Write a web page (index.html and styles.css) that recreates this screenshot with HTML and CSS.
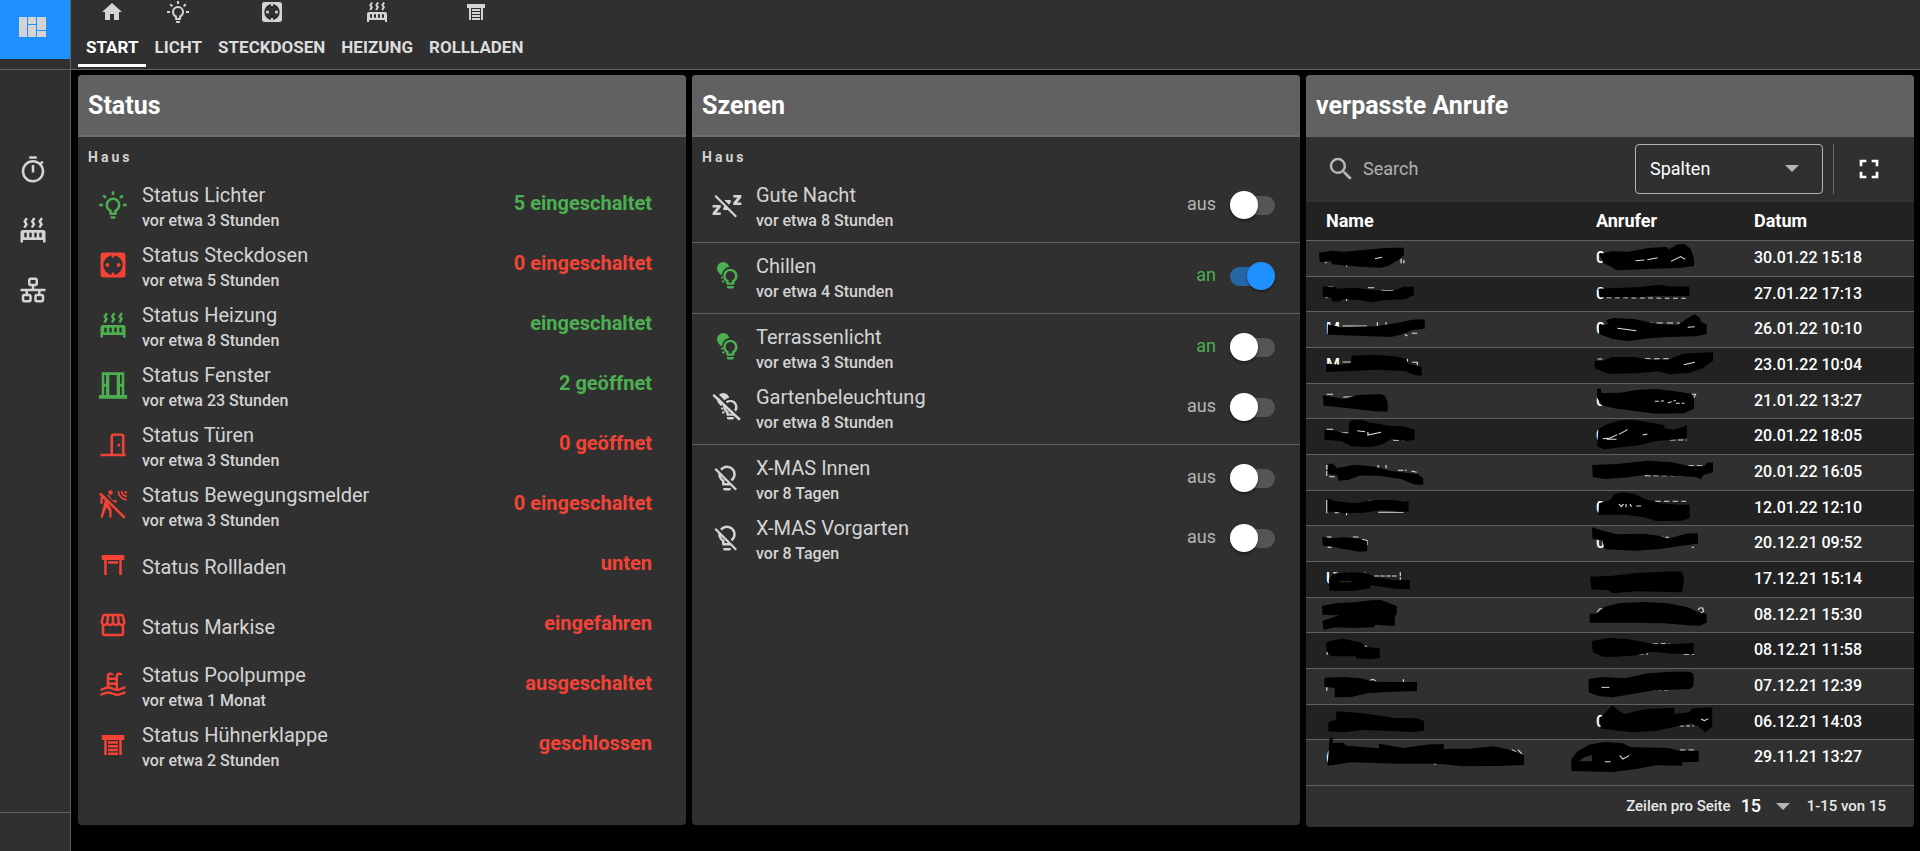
FILE: index.html
```html
<!DOCTYPE html>
<html lang="de">
<head>
<meta charset="utf-8">
<title>Start</title>
<link rel="stylesheet" href="styles.css">
</head>
<body>
<svg class="sprite" aria-hidden="true">
  <symbol id="i-home" viewBox="0 0 24 24"><path d="M10,20V14H14V20H19V12H22L12,3L2,12H5V20H10Z"/></symbol>
  <symbol id="i-bulb-on" viewBox="0 0 24 24"><path d="M20,11H23V13H20V11M1,11H4V13H1V11M13,1V4H11V1H13M4.92,3.5L7.05,5.64L5.63,7.05L3.5,4.93L4.92,3.5M16.95,5.63L19.07,3.5L20.5,4.93L18.37,7.05L16.95,5.63M12,6A6,6 0 0,1 18,12C18,14.22 16.79,16.16 15,17.2V19A1,1 0 0,1 14,20H10A1,1 0 0,1 9,19V17.2C7.21,16.16 6,14.22 6,12A6,6 0 0,1 12,6M14,21V22A1,1 0 0,1 13,23H11A1,1 0 0,1 10,22V21H14M11,18H13V15.87C14.73,15.43 16,13.86 16,12A4,4 0 0,0 12,8A4,4 0 0,0 8,12C8,13.86 9.27,15.43 11,15.87V18Z"/></symbol>
  <symbol id="i-socket" viewBox="0 0 24 24"><path fill-rule="evenodd" d="M4.2,2A2.2,2.2 0 0,0 2,4.2V19.8C2,21 3,22 4.2,22H19.8A2.2,2.2 0 0,0 22,19.8V4.2C22,3 21,2 19.8,2H4.2M13,4.1A8,8 0 0,1 13,19.9V18H11V19.9A8,8 0 0,1 11,4.1V6H13V4.1Z"/><circle cx="7.5" cy="12" r="1.6"/><circle cx="16.5" cy="12" r="1.6"/></symbol>
  <symbol id="i-radiator" viewBox="0 0 24 24"><path fill-rule="evenodd" d="M7.95,3L6.53,5.19L7.95,7.4L5.95,10.5L4.22,9.6L5.64,7.39L4.22,5.19L6.22,2.09L7.95,3M13.95,2.89L12.53,5.1L13.95,7.3L11.95,10.4L10.22,9.5L11.64,7.3L10.22,5.1L12.22,2L13.95,2.89M20,2.89L18.56,5.1L20,7.3L18,10.4L16.25,9.5L17.67,7.3L16.25,5.1L18.25,2L20,2.89M2,22V14A2,2 0 0,1 4,12H20A2,2 0 0,1 22,14V22H20V20H4V22H2M6,14A1,1 0 0,0 5,15V17A1,1 0 0,0 7,17V15A1,1 0 0,0 6,14M10,14A1,1 0 0,0 9,15V17A1,1 0 0,0 11,17V15A1,1 0 0,0 10,14M14,14A1,1 0 0,0 13,15V17A1,1 0 0,0 15,17V15A1,1 0 0,0 14,14M18,14A1,1 0 0,0 17,15V17A1,1 0 0,0 19,17V15A1,1 0 0,0 18,14Z"/></symbol>
  <symbol id="i-shutter" viewBox="0 0 24 24"><path d="M3 4H21V8H19V20H17V8H7V20H5V8H3V4M8 9H16V11H8V9M8 12H16V14H8V12M8 15H16V17H8V15M8 18H16V20H8V18Z"/></symbol>
  <symbol id="i-shutter-open" viewBox="0 0 24 24"><path d="M3,4H21V8H19V20H17V8H7V20H5V8H3V4M8,9H16V11H8V9Z"/></symbol>
  <symbol id="i-timer" viewBox="0 0 24 24"><path d="M12,20A7,7 0 0,1 5,13A7,7 0 0,1 12,6A7,7 0 0,1 19,13A7,7 0 0,1 12,20M19.03,7.39L20.45,5.97C20,5.46 19.55,5 19.04,4.56L17.62,6C16.07,4.74 14.12,4 12,4A9,9 0 0,0 3,13A9,9 0 0,0 12,22C17,22 21,17.97 21,13C21,10.88 20.26,8.93 19.03,7.39M11,14H13V8H11M15,1H9V3H15V1Z"/></symbol>
  <symbol id="i-lan" viewBox="0 0 24 24"><path d="M10,2C8.89,2 8,2.89 8,4V7C8,8.11 8.89,9 10,9H11V11H2V13H6V15H5C3.89,15 3,15.89 3,17V20C3,21.11 3.89,22 5,22H9C10.11,22 11,21.11 11,20V17C11,15.89 10.11,15 9,15H8V13H16V15H15C13.89,15 13,15.89 13,17V20C13,21.11 13.89,22 15,22H19C20.11,22 21,21.11 21,20V17C21,15.89 20.11,15 19,15H18V13H22V11H13V9H14C15.11,9 16,8.11 16,7V4C16,2.89 15.11,2 14,2H10M10,4H14V7H10V4M5,17H9V20H5V17M15,17H19V20H15V17Z"/></symbol>
  <symbol id="i-window" viewBox="0 0 24 24"><path fill-rule="evenodd" d="M3,1.7H21V20H23.3V23H.7V20H3ZM5,4V11H6.4V4ZM5,13.4V20H6.4V13.4ZM9,4V20H15V4ZM17.6,4V11H19V4ZM17.6,13.4V20H19V13.4Z"/></symbol>
  <symbol id="i-door" viewBox="0 0 24 24"><path fill-rule="evenodd" d="M2,19H10V5A2.2,2.2 0 0,1 12.2,2.8H19A2.2,2.2 0 0,1 21.2,5V19H22V21H2ZM12,19H19.2V5.6A1,1 0 0,0 18.2,4.6H13A1,1 0 0,0 12,5.6Z"/><circle cx="16.8" cy="12" r="1.2"/></symbol>
  <symbol id="i-motion-off" viewBox="0 0 24 24"><path d="M10,0.2A1.8,1.8 0 1,0 10,3.8A1.8,1.8 0 1,0 10,0.2M15.67,1A7.33,7.33 0 0,0 23,8.33V7A6,6 0 0,1 17,1H15.67M18.33,1C18.33,3.58 20.42,5.67 23,5.67V4.33C21.16,4.33 19.67,2.84 19.67,1H18.33M21,1A2,2 0 0,0 23,3V1H21M7.92,4.03C7.75,4.03 7.58,4.06 7.42,4.11L2,5.8V11H3.8V7.33L5.91,6.67L2,22H3.8L6.67,13.89L9,17V22H10.8V15.59L8.31,11.05L9.04,8.18L10.12,10H15V8.2H11.38L9.38,4.87C9.08,4.37 8.54,4.03 7.92,4.03Z"/><path class="gap" d="M3,1.6L22.5,21"/><path class="slash" d="M1.6,2.8L21.4,22.2"/></symbol>
  <symbol id="i-store" viewBox="0 0 24 24"><path d="M21.9 8.89l-1.05-4.37c-.22-.9-1-1.52-1.91-1.52H5.05c-.9 0-1.69.63-1.9 1.52L2.1 8.89c-.24 1.02-.02 2.06.62 2.88.08.11.19.19.28.29V19c0 1.1.9 2 2 2h14c1.1 0 2-.9 2-2v-6.94c.09-.09.2-.18.28-.28.64-.82.87-1.87.62-2.89zm-2.99-3.9l1.05 4.37c.1.42.01.84-.25 1.17-.14.18-.44.47-.94.47-.61 0-1.14-.49-1.21-1.14L16.98 5l1.93-.01zM13 5h1.96l.54 4.52c.05.39-.07.78-.33 1.07-.22.26-.54.41-.95.41-.67 0-1.22-.59-1.22-1.31V5zM8.49 9.52L9.04 5H11v4.69c0 .72-.55 1.31-1.29 1.31-.34 0-.65-.15-.89-.41-.25-.29-.37-.68-.33-1.07zm-4.45-.16L5.05 5h1.97l-.58 4.86c-.08.65-.6 1.14-1.21 1.14-.49 0-.8-.29-.93-.47-.27-.32-.36-.75-.26-1.17zM5 19v-6.03c.08.01.15.03.23.03.87 0 1.66-.36 2.24-.95.6.6 1.4.95 2.31.95.87 0 1.65-.36 2.23-.93.59.57 1.39.93 2.29.93.84 0 1.64-.35 2.24-.95.58.59 1.37.95 2.24.95.08 0 .15-.02.23-.03V19H5z"/></symbol>
  <symbol id="i-pool" viewBox="0 0 24 24"><path d="M2,15C3.67,14.25 5.33,13.5 7,13.17V5A3,3 0 0,1 10,2C11.31,2 12.42,2.83 12.83,4H10A1,1 0 0,0 9,5V6H14V5A3,3 0 0,1 17,2C18.31,2 19.42,2.83 19.83,4H17A1,1 0 0,0 16,5V14.94C18,14.62 20,13 22,13V15C19.78,15 17.56,17 15.33,17C13.11,17 10.89,15 8.67,15C6.44,15 4.22,16 2,17V15M14,8H9V10H14V8M14,12H9V13C10.67,13.16 12.33,14.31 14,14.79V12M2,19C4.22,18 6.44,17 8.67,17C10.89,17 13.11,19 15.33,19C17.56,19 19.78,17 22,17V19C19.78,19 17.56,21 15.33,21C13.11,21 10.89,19 8.67,19C6.44,19 4.22,20 2,21V19Z"/></symbol>
  <symbol id="i-sleep-off" viewBox="0 0 24 24"><path d="M2,5.27L3.28,4L20,20.72L18.73,22L12.73,16H9V14.39L9.79,13.06L2,5.27M23.5,12H17V10.21L20.39,6H17V4H23.5V5.79L20.2,10H23.5V12M9.82,8H15V9.79L13.54,11.72L9.82,8M7,20H.5V18.21L4,14H.5V12H7V13.79L3.62,18H7V20Z"/></symbol>
  <symbol id="i-bulbs" viewBox="0 0 24 24"><path d="M13.8,4.6A5,5 0 1,0 5.6,9.6C6.2,10.3 6.7,10.6 6.9,11H8.1C8.1,8.2 10.5,5.2 13.8,4.6ZM7.3,12.4H8.5L9,14H7.3ZM8,15.5H10V17.2H9A1,1 0 0,1 8,16.2Z"/><path fill-rule="evenodd" d="M14.8,6.4A5.6,5.6 0 0,1 18,16.6V18A1,1 0 0,1 17,19H12.4A1,1 0 0,1 11.4,18V16.6A5.6,5.6 0 0,1 14.8,6.4ZM13.3,17.2H16V15.4A3.8,3.8 0 1,0 13.3,15.4Z"/><path d="M12,20H17.4V21.2A1,1 0 0,1 16.4,22H13A1,1 0 0,1 12,21.2Z"/></symbol>
  <symbol id="i-bulbs-off" viewBox="0 0 24 24"><use href="#i-bulbs"/><path class="gap" d="M3,1.1L23,21"/><path class="slash" d="M1,2.3L22.3,22.2"/></symbol>
  <symbol id="i-bulb-off" viewBox="0 0 24 24"><path d="M12,2C9.76,2 7.78,3.05 6.5,4.68L7.93,6.11C8.84,4.84 10.32,4 12,4A5,5 0 0,1 17,9C17,10.68 16.16,12.16 14.89,13.06L16.31,14.5C17.94,13.21 19,11.24 19,9A7,7 0 0,0 12,2M3.28,4L2,5.27L5.04,8.3C5,8.53 5,8.76 5,9C5,11.38 6.19,13.47 8,14.74V17A1,1 0 0,0 9,18H14.73L18.73,22L20,20.72L3.28,4M7.23,10.5L12.73,16H10V13.58C8.68,13 7.66,11.88 7.23,10.5M9,20V21A1,1 0 0,0 10,22H14A1,1 0 0,0 15,21V20H9Z"/></symbol>
  <symbol id="i-search" viewBox="0 0 24 24"><path d="M9.5,3A6.5,6.5 0 0,1 16,9.5C16,11.11 15.41,12.59 14.44,13.73L14.71,14H15.5L20.5,19L19,20.5L14,15.5V14.71L13.73,14.44C12.59,15.41 11.11,16 9.5,16A6.5,6.5 0 0,1 3,9.5A6.5,6.5 0 0,1 9.5,3M9.5,5C7,5 5,7 5,9.5C5,12 7,14 9.5,14C12,14 14,12 14,9.5C14,7 12,5 9.5,5Z"/></symbol>
  <symbol id="i-full" viewBox="0 0 24 24"><path d="M5,5H10V7H7V10H5V5M14,5H19V10H17V7H14V5M17,14H19V19H14V17H17V14M10,17V19H5V14H7V17H10Z"/></symbol>
</svg>

<div class="app">
  <aside class="side">
    <div class="side-top">
      <button class="side-active" aria-label="Ansichten"><svg width="27" height="20" viewBox="0 0 27 20"><path d="M0,0H8V20H0ZM9,0H17V7H9ZM9,8H17V20H9ZM18,0H27V13H18ZM18,14H27V20H18Z"/></svg></button>
    </div>
    <nav class="side-nav">
      <a href="#timer" aria-label="Timer"><svg class="icon"><use href="#i-timer"/></svg></a>
      <a href="#heizung" aria-label="Heizung"><svg class="icon"><use href="#i-radiator"/></svg></a>
      <a href="#netzwerk" aria-label="Netzwerk"><svg class="icon"><use href="#i-lan"/></svg></a>
    </nav>
    <div class="side-foot"></div>
  </aside>

  <div class="page">
    <nav class="tabs">
      <a class="tab active" href="#start"><svg><use href="#i-home"/></svg><span>START</span></a>
      <a class="tab" href="#licht"><svg><use href="#i-bulb-on"/></svg><span>LICHT</span></a>
      <a class="tab" href="#steckdosen"><svg><use href="#i-socket"/></svg><span>STECKDOSEN</span></a>
      <a class="tab" href="#heizung"><svg><use href="#i-radiator"/></svg><span>HEIZUNG</span></a>
      <a class="tab" href="#rollladen"><svg><use href="#i-shutter"/></svg><span>ROLLLADEN</span></a>
    </nav>

    <main class="cards">
      <section class="card">
        <h2 class="card-title">Status</h2>
        <h3 class="group">Haus</h3>
        <ul class="list">
          <li class="row on"><svg class="icon"><use href="#i-bulb-on"/></svg><div class="text"><div class="name">Status Lichter</div><div class="sub">vor etwa 3 Stunden</div></div><strong class="value">5 eingeschaltet</strong></li>
          <li class="row off"><svg class="icon"><use href="#i-socket"/></svg><div class="text"><div class="name">Status Steckdosen</div><div class="sub">vor etwa 5 Stunden</div></div><strong class="value">0 eingeschaltet</strong></li>
          <li class="row on"><svg class="icon"><use href="#i-radiator"/></svg><div class="text"><div class="name">Status Heizung</div><div class="sub">vor etwa 8 Stunden</div></div><strong class="value">eingeschaltet</strong></li>
          <li class="row on"><svg class="icon"><use href="#i-window"/></svg><div class="text"><div class="name">Status Fenster</div><div class="sub">vor etwa 23 Stunden</div></div><strong class="value">2 geöffnet</strong></li>
          <li class="row off"><svg class="icon"><use href="#i-door"/></svg><div class="text"><div class="name">Status Türen</div><div class="sub">vor etwa 3 Stunden</div></div><strong class="value">0 geöffnet</strong></li>
          <li class="row off"><svg class="icon"><use href="#i-motion-off"/></svg><div class="text"><div class="name">Status Bewegungsmelder</div><div class="sub">vor etwa 3 Stunden</div></div><strong class="value">0 eingeschaltet</strong></li>
          <li class="row off"><svg class="icon"><use href="#i-shutter-open"/></svg><div class="text"><div class="name">Status Rollladen</div></div><strong class="value">unten</strong></li>
          <li class="row off"><svg class="icon"><use href="#i-store"/></svg><div class="text"><div class="name">Status Markise</div></div><strong class="value">eingefahren</strong></li>
          <li class="row off"><svg class="icon"><use href="#i-pool"/></svg><div class="text"><div class="name">Status Poolpumpe</div><div class="sub">vor etwa 1 Monat</div></div><strong class="value">ausgeschaltet</strong></li>
          <li class="row off"><svg class="icon"><use href="#i-shutter"/></svg><div class="text"><div class="name">Status Hühnerklappe</div><div class="sub">vor etwa 2 Stunden</div></div><strong class="value">geschlossen</strong></li>
        </ul>
      </section>

      <section class="card">
        <h2 class="card-title">Szenen</h2>
        <h3 class="group">Haus</h3>
        <div class="list scenes">
          <label class="row"><svg class="icon"><use href="#i-sleep-off"/></svg><span class="text"><span class="name">Gute Nacht</span><span class="sub">vor etwa 8 Stunden</span></span><span class="state">aus</span><input class="switch" type="checkbox"></label>
          <hr>
          <label class="row on"><svg class="icon"><use href="#i-bulbs"/></svg><span class="text"><span class="name">Chillen</span><span class="sub">vor etwa 4 Stunden</span></span><span class="state">an</span><input class="switch" type="checkbox" checked></label>
          <hr>
          <label class="row on"><svg class="icon"><use href="#i-bulbs"/></svg><span class="text"><span class="name">Terrassenlicht</span><span class="sub">vor etwa 3 Stunden</span></span><span class="state">an</span><input class="switch" type="checkbox"></label>
          <label class="row"><svg class="icon"><use href="#i-bulbs-off"/></svg><span class="text"><span class="name">Gartenbeleuchtung</span><span class="sub">vor etwa 8 Stunden</span></span><span class="state">aus</span><input class="switch" type="checkbox"></label>
          <hr>
          <label class="row"><svg class="icon"><use href="#i-bulb-off"/></svg><span class="text"><span class="name">X-MAS Innen</span><span class="sub">vor 8 Tagen</span></span><span class="state">aus</span><input class="switch" type="checkbox"></label>
          <label class="row"><svg class="icon"><use href="#i-bulb-off"/></svg><span class="text"><span class="name">X-MAS Vorgarten</span><span class="sub">vor 8 Tagen</span></span><span class="state">aus</span><input class="switch" type="checkbox"></label>
        </div>
      </section>

      <section class="card calls">
        <h2 class="card-title">verpasste Anrufe</h2>
        <div class="toolbar">
          <label class="search"><svg class="icon"><use href="#i-search"/></svg><input type="search" placeholder="Search" aria-label="Search"></label>
          <div class="select columns"><select aria-label="Spalten"><option>Spalten</option></select></div>
          <div class="full"><button aria-label="Vollbild"><svg><use href="#i-full"/></svg></button></div>
        </div>
        <table>
          <colgroup><col class="c-name"><col class="c-caller"><col></colgroup>
          <thead><tr><th>Name</th><th>Anrufer</th><th>Datum</th></tr></thead>
          <tbody>
            <tr><td><svg class="ink" preserveAspectRatio="none" viewBox="66 33 253 90"><path class="frag" d="M66,90V100M118,104V110M256,86V100M263,90V100"/><path d="M48,68L80,62L110,65L160,60L215,54L263,53V76L246,92L224,107L205,113L150,110L82,103L78,94L50,97Z"/><path class="frag" d="M190,86L208,82"/></svg></td>
              <td>0<svg class="ink" preserveAspectRatio="none" viewBox="748 33 253 90"><path d="M756,72L790,64L830,65L880,54L926,51L932,58L955,43L972,42L988,57L996,86V108L960,114L880,117L800,121L786,110L766,98Z"/><path class="frag" d="M848,92L870,90M878,89L904,83M938,94L962,80L974,88"/></svg></td><td>30.01.22 15:18</td></tr>
            <tr><td><svg class="ink" preserveAspectRatio="none" viewBox="66 142 253 90"><path class="frag" d="M72,172L86,172M68,196V206M118,206V214M172,174L188,174M205,182L236,184M262,174V180"/><path d="M58,171H90L96,177L140,174L190,182L235,184L262,171H288V196L268,208L215,211L180,218L150,211L110,208L98,216L82,215L78,203L58,202Z"/></svg></td>
              <td>0<svg class="ink" preserveAspectRatio="none" viewBox="748 142 253 90"><path class="frag" d="M775,204L975,206" stroke-dasharray="12 9"/><path d="M754,177L860,172L910,165L930,170L984,171V199L890,198L860,203L758,203Z"/></svg></td><td>27.01.22 17:13</td></tr>
            <tr><td>M<svg class="ink" preserveAspectRatio="none" viewBox="66 247 253 90"><path class="frag" d="M108,289H170M196,278V290M218,278V290M228,287L250,285M265,314L272,319M283,311H297"/><path d="M71,284L104,293L190,290L245,280L285,270L316,269V297L288,300L260,314L230,322L160,319L70,315Z"/></svg></td>
              <td>0<svg class="ink" preserveAspectRatio="none" viewBox="748 247 253 90"><path class="frag" d="M875,280H960" stroke-dasharray="16 10"/><path d="M756,286L778,284L774,271L792,265L846,268L900,282L955,286L984,262L998,254L1010,264L1015,278L1028,284V314L1000,320L930,322L880,326L830,334L790,328L756,313Z"/><path class="frag" d="M802,296L850,303M980,293L998,291"/></svg></td><td>26.01.22 10:10</td></tr>
            <tr><td>M<svg class="ink" preserveAspectRatio="none" viewBox="66 355 253 90"><path class="frag" d="M108,397H128M236,388L246,386M272,388V398M284,398H297V407"/><path d="M66,402L105,405L130,401V378L190,375L240,380L268,388L276,404L308,412V438L288,436L268,425L200,420L110,425L66,427Z"/></svg></td>
              <td><svg class="ink" preserveAspectRatio="none" viewBox="748 355 253 90"><path class="frag" d="M752,388H764M872,387H936" stroke-dasharray="14 9"/><path d="M744,394L765,393L790,382L846,382L890,391L930,390L968,372L1010,369L1044,368V393L1018,416L984,429L935,434L905,425L850,431L780,432L745,416Z"/><path class="frag" d="M970,405L998,398"/></svg></td><td>23.01.22 10:04</td></tr>
            <tr><td><svg class="ink" preserveAspectRatio="none" viewBox="66 460 253 90"><path class="frag" d="M68,491H84M110,499H142M200,490V495"/><path d="M58,494L112,505L145,493L186,491L205,490L215,495L222,515V543L190,542L120,532L60,525Z"/></svg></td>
              <td>0<svg class="ink" preserveAspectRatio="none" viewBox="748 460 253 90"><path class="frag" d="M990,491H1000L996,500"/><path d="M751,476L760,473L762,487L810,486L850,478L900,475L950,482L990,490L996,508V534L970,548L900,549L845,541L800,534L762,524L750,500Z"/><path class="frag" d="M897,512L920,511M930,517L950,509M950,518H972" stroke-dasharray="10 5"/></svg></td><td>21.01.22 13:27</td></tr>
            <tr><td><svg class="ink" preserveAspectRatio="none" viewBox="66 568 253 90"><path class="frag" d="M68,599H84M100,608L122,610M236,632H250M262,622V634"/><path d="M62,600L88,603L124,613V582L130,572L155,570L176,578L225,588L262,590L290,600V630L268,634L232,628L205,645L180,652L130,650L104,634L62,630Z"/><path class="frag" d="M145,603L165,606M172,607V616L205,608"/></svg></td>
              <td>0<svg class="ink" preserveAspectRatio="none" viewBox="748 568 253 90"><path class="frag" d="M935,631H978" stroke-dasharray="14 6"/><path d="M754,598L776,584L815,571L845,571L890,580L921,586V596L945,600L978,587V625L940,630L900,634L850,648L800,654L768,659L751,650Z"/><path class="frag" d="M765,627L784,625L802,615M775,629H800M806,614L828,600M866,616L878,613"/></svg></td><td>20.01.22 18:05</td></tr>
            <tr><td><svg class="ink" preserveAspectRatio="none" viewBox="66 676 253 90"><path class="frag" d="M68,706V742M74,741H88M110,735H180M198,706V718M218,706V716M248,722H270M282,724L296,728" stroke-dasharray="14 4"/><path d="M72,702H84L94,716L138,705L190,711L230,724L298,733L312,746V766L288,764L256,748L200,738L150,738L124,750L98,753L94,736L70,732Z"/></svg></td>
              <td><svg class="ink" preserveAspectRatio="none" viewBox="748 676 253 90"><path class="frag" d="M872,738H1012M982,708H1018" stroke-dasharray="14 7"/><path d="M738,706L800,703L880,693L940,698L985,710L1022,710L1028,700L1044,698V728L1020,736L1014,748L1000,742L930,738L870,736L820,744L770,748L740,742Z"/></svg></td><td>20.01.22 16:05</td></tr>
            <tr><td><svg class="ink" preserveAspectRatio="none" viewBox="66 781 253 90"><path class="frag" d="M68,808V848M88,846H100M118,842V854M174,812H188M198,845H262M262,812V818"/><path d="M70,803L90,812L140,818L190,808L230,808L262,812L275,813V843L250,843L210,838L160,846L110,848L90,843L70,843Z"/></svg></td>
              <td>0<svg class="ink" preserveAspectRatio="none" viewBox="748 781 253 90"><path class="frag" d="M898,812H976" stroke-dasharray="14 8"/><path d="M756,818L784,808L795,790L815,785L846,790L870,804L910,818L960,822H985V862L965,870L900,871L870,860L820,852L754,852Z"/><path class="frag" d="M806,820L812,828L818,820M824,820V830M834,820L838,828M850,826H862"/></svg></td><td>12.01.22 12:10</td></tr>
            <tr><td><svg class="ink" preserveAspectRatio="none" viewBox="66 78 253 90"><path class="frag" d="M68,111H80M70,142H80M134,111H148M158,118L170,122V136"/><path d="M56,110L76,115L110,112L145,115L170,124V154L150,155L100,145L76,138L58,137Z"/></svg></td>
              <td>0<svg class="ink" preserveAspectRatio="none" viewBox="748 78 253 90"><path class="frag" d="M910,112H934M990,142H996" stroke-dasharray="9 4"/><path d="M738,82L762,91L800,103L870,101L910,108L930,116L975,101L1006,100V131L960,138L910,147L850,152L770,148L764,122L739,116Z"/></svg></td><td>20.12.21 09:52</td></tr>
            <tr><td>U<svg class="ink" preserveAspectRatio="none" viewBox="66 187 253 90"><path class="frag" d="M94,217V222M120,217V222M164,217V224M188,229H246M254,218V240" stroke-dasharray="12 3"/><path d="M84,222L120,218L165,219L190,232L240,242L278,241V268H244L178,256V266L130,274L75,273L73,240Z"/><path class="frag dim" d="M100,246H130"/></svg></td>
              <td><svg class="ink" preserveAspectRatio="none" viewBox="748 187 253 90"><path d="M733,231L790,228L850,220L940,215L964,216L971,236L966,278L850,275L790,281L780,272L736,269Z"/></svg></td><td>17.12.21 15:14</td></tr>
            <tr><td><svg class="ink" preserveAspectRatio="none" viewBox="66 292 253 90"><path d="M56,316L90,308L145,304L180,299L205,298L225,307L245,316V341L240,347L240,376L190,372L188,380L130,382L90,380L60,388L57,361L98,344L57,342Z"/></svg></td>
              <td><svg class="ink" preserveAspectRatio="none" viewBox="748 292 253 90"><path class="frag" d="M751,334L758,324H764M1006,328L1010,322H1018L1020,332L1012,338"/><path d="M732,339H750L770,318L810,307L870,304L930,308L980,320L1010,336L1028,339V366L1010,375L980,374L920,368L840,366L732,366Z"/></svg></td><td>08.12.21 15:30</td></tr>
            <tr><td><svg class="ink" preserveAspectRatio="none" viewBox="66 400 253 90"><path class="frag" d="M69,457V465M160,440H170"/><path d="M67,428L90,420L110,417L158,430L165,441L202,446V475L178,479L142,476V470L80,470L67,455Z"/></svg></td>
              <td><svg class="ink" preserveAspectRatio="none" viewBox="748 400 253 90"><path class="frag" d="M855,463H880M892,432H934M970,464H996" stroke-dasharray="13 7"/><path d="M737,424L780,415L830,419L890,432L940,434L995,430V463L940,462L890,456L850,467L800,471L765,471L740,458Z"/></svg></td><td>08.12.21 11:58</td></tr>
            <tr><td><svg class="ink" preserveAspectRatio="none" viewBox="66 505 253 90"><path class="frag" d="M68,560V570M106,558H118M176,540L184,536L192,540M262,536V543"/><path d="M62,531L110,529L150,532L190,543L240,544H296V571L220,574L170,578L130,589L88,590V562L62,558Z"/></svg></td>
              <td><svg class="ink" preserveAspectRatio="none" viewBox="748 505 253 90"><path class="frag" d="M890,568H936" stroke-dasharray="10 5"/><path d="M729,535L765,529L820,533L880,518L940,513L985,513L995,520V557L985,565L890,570L840,580L790,590L755,587L730,575Z"/><path class="frag" d="M762,560H782"/></svg></td><td>07.12.21 12:39</td></tr>
            <tr><td><svg class="ink" preserveAspectRatio="none" viewBox="66 613 253 90"><path d="M92,632L150,637L190,643L240,652L295,653L314,661V690L280,694L220,690L160,688L110,695L72,692V665L92,656Z"/></svg></td>
              <td>0<svg class="ink" preserveAspectRatio="none" viewBox="748 613 253 90"><path class="frag" d="M960,676H996" stroke-dasharray="10 6"/><path d="M758,652L778,628L790,614L800,625L820,641L870,626L946,621V640L985,635L990,624L1042,620V678L1025,695L1005,675L990,668L900,690L840,695L760,684Z"/><path class="frag" d="M1014,655L1022,660L1032,654"/></svg></td><td>06.12.21 14:03</td></tr>
            <tr><td>(<svg class="ink" preserveAspectRatio="none" viewBox="66 721 253 90"><path class="frag" d="M335,786L343,795M536,750L546,756M552,750L562,764M552,794H562"/><path d="M75,716L82,712L84,730L108,729L118,738L200,746V732L262,745L330,734H364V748L430,747L490,740L530,750L567,766V796L500,799L410,800L350,792L250,792L130,788L70,799Z"/></svg></td>
              <td><svg class="ink" preserveAspectRatio="none" viewBox="748 721 253 90"><path class="frag" d="M960,751H1000" stroke-dasharray="14 8"/><path fill-rule="evenodd" d="M685,780L700,756L730,735L770,727L815,731L835,742L930,745L960,753H1008V786L966,788V798L900,797L850,808L790,817L686,814ZM704,785H738V766L720,772Z"/><path class="frag" d="M770,786H785M808,768L816,778L832,768"/></svg></td><td>29.11.21 13:27</td></tr>
          </tbody>
        </table>
        <div class="pager">
          <label for="rows">Zeilen pro Seite</label>
          <div class="select rows"><select id="rows"><option>15</option></select></div>
          <span>1-15 von 15</span>
        </div>
      </section>
    </main>
  </div>
</div>
</body>
</html>
```
FILE: styles.css
```css
* { box-sizing: border-box; }

body {
  margin: 0;
  background: #000;
  color: #d4d4d4;
  font: 400 18px/24px Roboto, "Liberation Sans", sans-serif;
}

h2, h3, ul, hr { margin: 0; padding: 0; }
a { color: inherit; text-decoration: none; }
button, select, input { margin: 0; border: 0; background: none; color: inherit; font: inherit; }
button { padding: 0; }
svg { display: block; fill: currentColor; }
.sprite { position: absolute; width: 0; height: 0; }
.icon { flex: none; width: 30px; height: 30px; }
.gap { fill: none; stroke: #303030; stroke-width: 2; }
.slash { fill: none; stroke: currentColor; stroke-width: 2; }

.app { display: flex; min-height: 100vh; }

/* side bar */
.side {
  display: flex;
  flex-direction: column;
  flex: none;
  width: 71px;
  background: #303030;
  border-right: 1px solid #616161;
}
.side-top { height: 70px; border-bottom: 1px solid #616161; }
.side-active { display: block; width: 100%; height: 59px; padding: 0 0 5px 19px; background: #1e90ff; }
.side-nav { flex: 1; padding: 70px 5px 0 0; }
.side-nav a { display: flex; align-items: center; justify-content: center; height: 60px; }
.side-foot { height: 39px; border-top: 1px solid #616161; }

/* tab bar */
.page { flex: 1; min-width: 0; }
.tabs { display: flex; height: 70px; padding-left: 7px; background: #303030; border-bottom: 1px solid #616161; }
.tab {
  display: flex;
  flex-direction: column;
  align-items: center;
  gap: 11px;
  height: 67px;
  padding: 0 8px;
  border-bottom: 3px solid transparent;
  color: #dcdcdc;
  font-size: 17px;
  font-weight: 700;
}
.tab svg { width: 24px; height: 24px; color: #d4d4d4; }
.tab.active { border-bottom-color: #fff; }
.tab.active span { color: #fff; }

/* cards */
.cards { display: grid; grid-template-columns: repeat(3, minmax(0, 1fr)); gap: 6px; padding: 5px 6px 24px 7px; }
.card { margin-bottom: 2px; overflow: hidden; border-radius: 4px; background: #303030; }
.calls { margin-bottom: 0; }
.card-title {
  height: 62px;
  padding: 0 10px;
  border-bottom: 2px solid #6c6c6c;
  background: #616161;
  color: #fff;
  font-size: 25px;
  font-weight: 700;
  line-height: 62px;
}
.calls .card-title { border-bottom-color: #616161; }
.group { padding: 8px 10px 6px; font-size: 14px; font-weight: 700; letter-spacing: 3px; }

.list { list-style: none; }
.row { display: flex; align-items: center; height: 60px; padding: 0 34px 0 20px; }
.row.on .icon, .on .value, .on .state { color: #4caf50; }
.row.off .icon, .off .value { color: #f44336; }
.text { flex: 1; padding: 4px 0 0 14px; }
.name, .sub { display: block; }
.name { font-size: 20px; line-height: 28px; }
.sub { font-size: 16px; font-weight: 500; }
.value { padding-bottom: 4px; font-size: 20px; font-weight: 700; }

.scenes .row { padding-right: 25px; }
.scenes hr { height: 1px; margin: 7px 0 3px; border: 0; background: #616161; }
.state { padding: 0 14px 2px; color: #b4b4b4; }
.switch {
  position: relative;
  width: 45px;
  height: 19px;
  border-radius: 10px;
  background: #555;
  appearance: none;
}
.switch::before {
  content: "";
  position: absolute;
  top: -5px;
  left: 0;
  width: 28px;
  height: 28px;
  border-radius: 50%;
  background: #fff;
  box-shadow: 0 2px 3px rgba(0, 0, 0, .4);
}
.switch:checked { background: #2766a5; }
.switch:checked::before { left: 17px; background: #1e90ff; }

/* call list */
.toolbar { display: flex; align-items: center; height: 65px; padding: 0 20px 2px; }
.search { display: flex; flex: 1; align-items: center; gap: 7px; color: #b8b8b8; }
.search input { flex: 1; min-width: 0; padding: 0; outline: 0; }
.search input::placeholder { color: #b0b0b0; opacity: 1; }
.select { display: flex; align-items: center; color: #fff; }
.select select { appearance: none; outline: 0; width: 100%; }
.select::after {
  content: "";
  flex: none;
  border: solid transparent;
  border-width: 7px 7px 0;
  border-top-color: #b4b4b4;
}
.columns { width: 188px; height: 50px; padding: 0 23px 0 14px; border: 1px solid #b4b4b4; border-radius: 4px; }
.columns select { padding: 0; }
.full { display: flex; align-items: center; height: 50px; margin-left: 10px; padding: 0 9px 0 19px; border-left: 1px solid #6c6c6c; color: #fff; }
.full svg { width: 32px; height: 32px; }

table { width: 100%; table-layout: fixed; border-collapse: collapse; color: #fff; }
.c-name { width: 44.4%; }
.c-caller { width: 26%; }
th, td { position: relative; padding: 6px 0 0 20px; text-align: left; vertical-align: top; border-bottom: 1px solid #616161; }
th { height: 38px; background: #222; font-weight: 700; line-height: 26px; }
td { height: 36px; font-size: 16px; font-weight: 500; line-height: 22px; }
tbody tr:nth-child(3n+2) td { height: 35px; }
tbody tr:nth-child(even) { background: #222; }
tbody tr:last-child td { height: 46px; }
.ink { position: absolute; top: 0; left: 20px; width: 100px; height: 30px; overflow: visible; fill: #000; }
.frag { fill: none; stroke: #ddd; stroke-width: 3; }
.dim { stroke: #333; }

.pager { display: flex; align-items: center; justify-content: flex-end; height: 41px; padding-right: 28px; color: #e8e8e8; font-size: 15px; font-weight: 500; }
.rows { margin: 0 17px 0 10px; font-size: 18px; }
.rows select { width: 35px; padding: 0; }
```
